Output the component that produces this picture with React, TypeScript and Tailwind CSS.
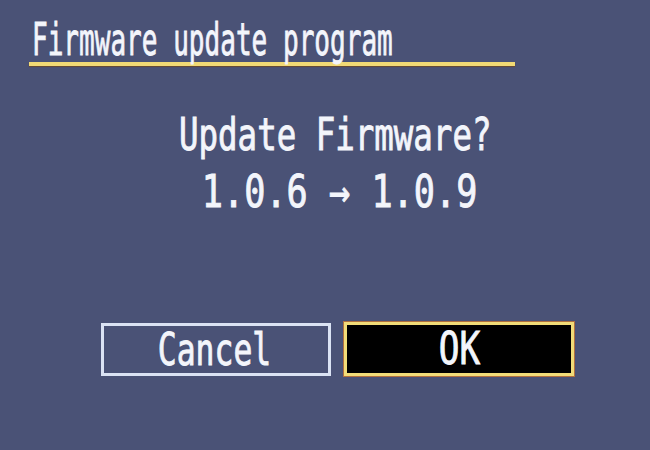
import React from "react";

const mono = { fontFamily: '"DejaVu Sans Mono", "Liberation Mono", monospace' };

export default function App() {
  return (
    <div
      className="w-[650px] h-[450px] bg-[#4a5276] flex flex-col text-[#f3f5fb] overflow-hidden [-webkit-text-stroke:0.9px_#f3f5fb]"
      style={mono}
    >
      <div className="pt-[18px] pl-[32px] h-[62px]">
        <div className="h-[44px] text-[45px] leading-[44px] whitespace-nowrap inline-block origin-left scale-x-[0.579]">
          Firmware update program
        </div>
      </div>
      <div className="ml-[29px] w-[486px] h-[4px] bg-[#f2da74] shadow-[0_1px_1px_#6a4a30]" />
      <div className="mt-[47px] h-[44px] flex justify-center">
        <div className="text-[44px] leading-[44px] whitespace-nowrap scale-x-[0.737] pl-[28px]">
          Update Firmware?
        </div>
      </div>
      <div className="mt-[13px] h-[44px] flex justify-center">
        <div className="text-[44px] leading-[44px] whitespace-nowrap scale-x-[0.80] pl-[36px]">
          1.0.6 → 1.0.9
        </div>
      </div>
      <div className="mt-[109px] pl-[101px] flex gap-[13px]">
        <div className="w-[230px] h-[53px] border-[3px] border-[#dbe3f4] flex items-center justify-center">
          <span className="text-[44px] leading-[44px] whitespace-nowrap scale-x-[0.714] -ml-[4px]">
            Cancel
          </span>
        </div>
        <div className="w-[230px] h-[54px] -mt-[1px] border-[3px] border-[#f2dc78] bg-black flex items-center justify-center shadow-[0_0_0_1px_#b07040]">
          <span className="text-[44px] leading-[44px] whitespace-nowrap scale-x-[0.78]">
            OK
          </span>
        </div>
      </div>
    </div>
  );
}
